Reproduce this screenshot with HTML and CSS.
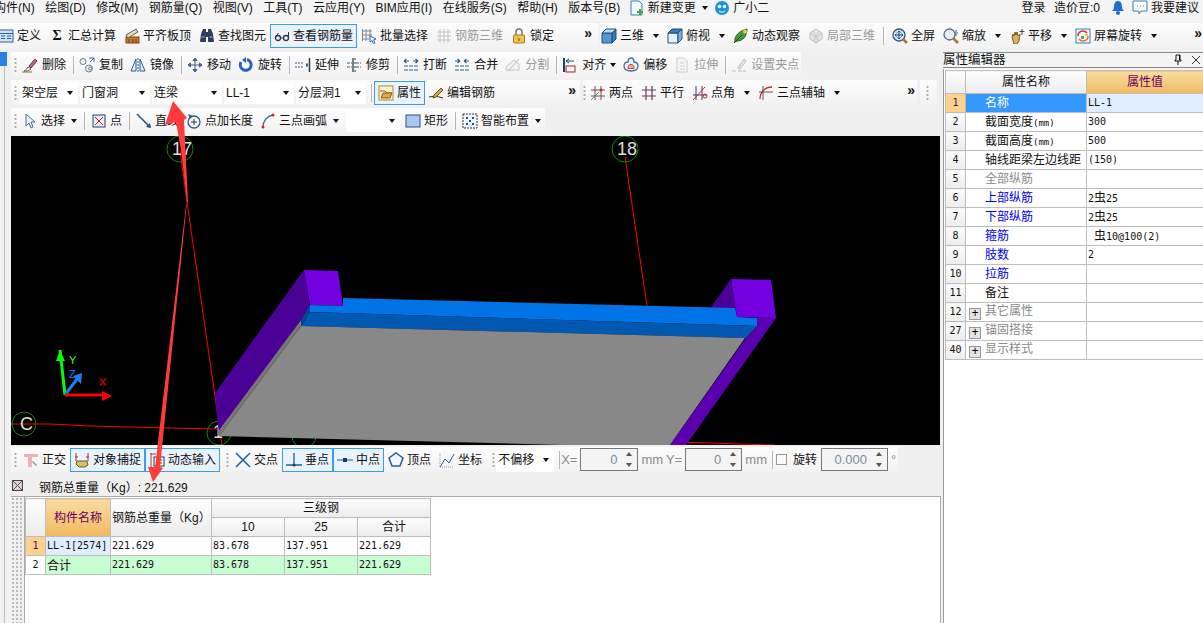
FILE: index.html
```html
<!DOCTYPE html>
<html lang="zh">
<head>
<meta charset="utf-8">
<title>钢筋算量</title>
<link rel="stylesheet" href="styles.css">
</head>
<body>
<svg class="sprite" aria-hidden="true">
<symbol id="i-def" viewBox="0 0 16 16"><rect x="1" y="2" width="14" height="12" fill="#cfe3f7" stroke="#2b5f9e"/><path d="M1 5.500h14M3 8h4M3 10.500h4M9 8h4M9 10.500h4" stroke="#2b5f9e"/></symbol>
<symbol id="i-flat" viewBox="0 0 16 16"><rect x="2" y="9" width="13" height="6" fill="#c9772b" stroke="#7a4312"/><path d="M2 7 12 1l2 3L4 10z" fill="#f2d98e" stroke="#4a6a8c"/><path d="M5 11v4M9 11v4M12 11v4" stroke="#7a4312"/></symbol>
<symbol id="i-find" viewBox="0 0 16 16"><path d="M2 6 4 1h3v13H1zM14 6l-2-5H9v13h6z" fill="#2c3f5c"/><path d="M7 4h2v5H7z" fill="#2c3f5c"/><path d="M2.500 9h3M10.500 9h3" stroke="#9fb6d6"/></symbol>
<symbol id="i-view" viewBox="0 0 16 16"><circle cx="4" cy="10" r="2.500" fill="none" stroke="#333" stroke-width="1.300"/><circle cx="12" cy="10" r="2.500" fill="none" stroke="#333" stroke-width="1.300"/><path d="M6.500 10h3M14.500 9V4M1.500 9l3-4" fill="none" stroke="#333"/></symbol>
<symbol id="i-batch" viewBox="0 0 16 16"><path d="M1.500 1v12M5 1v12M9 1v8M1 3h10M1 7h10M1 11h7" stroke="#7a8796" fill="none"/><path d="M9 8l6 3-2.500 1 1.500 3-1.500.5-1.500-3L9 14z" fill="#fff" stroke="#2b6cb0"/></symbol>
<symbol id="i-r3d" viewBox="0 0 16 16"><path d="M1 4h14M1 8h14M1 12h14M4 1v14M8 1v14M12 1v14" stroke="#c4c4c4"/></symbol>
<symbol id="i-lock" viewBox="0 0 16 16"><path d="M5 7V4a3 3 0 0 1 6 0v3" fill="none" stroke="#777" stroke-width="1.500"/><rect x="2.500" y="7" width="11" height="8" rx="1" fill="#f0c44c" stroke="#a07c1c"/><path d="M8 10v3" stroke="#6b5310"/></symbol>
<symbol id="i-cube" viewBox="0 0 16 16"><path d="M1 5h10v10H1z" fill="#4d9ad8" stroke="#234f78"/><path d="M1 5l4-4h10l-4 4z" fill="#b9dcf5" stroke="#234f78"/><path d="M11 5l4-4v10l-4 4z" fill="#2f78b6" stroke="#234f78"/></symbol>
<symbol id="i-top" viewBox="0 0 16 16"><path d="M1 5h10v10H1z" fill="#e8f1f9" stroke="#234f78"/><path d="M1 5l4-4h10l-4 4z" fill="#3d7fb8" stroke="#234f78"/><path d="M11 5l4-4v10l-4 4z" fill="#7db3dd" stroke="#234f78"/></symbol>
<symbol id="i-orbit" viewBox="0 0 16 16"><path d="M2 14C1 8 6 3 14 1c0 7-4 12-10 12z" fill="#4d9a3a" stroke="#2a5a20"/><circle cx="12" cy="3.500" r="2" fill="#f0d040"/><path d="M1 15 9 7" stroke="#20441a"/></symbol>
<symbol id="i-part" viewBox="0 0 16 16"><path d="M8 1l6 4v6l-6 4-6-4V5z" fill="#e6e6e6" stroke="#c0c0c0"/><path d="M2 5l6 4 6-4M8 9v6M5 3l6 10M11 3 5 13" stroke="#c8c8c8" fill="none"/></symbol>
<symbol id="i-full" viewBox="0 0 16 16"><circle cx="7" cy="7" r="6" fill="#d6e7f7" stroke="#33587e" stroke-width="1.300"/><path d="M7 3v8M3 7h8M7 3 5.500 4.500M7 3l1.500 1.500M7 11 5.500 9.500M7 11l1.500-1.500M3 7l1.500-1.500M3 7l1.500 1.500M11 7 9.500 5.500M11 7 9.500 8.500" stroke="#1f4a7a" fill="none"/><path d="M11 11l4 4" stroke="#a6782a" stroke-width="2.500"/></symbol>
<symbol id="i-zoom" viewBox="0 0 16 16"><circle cx="6.500" cy="6.500" r="5.500" fill="#e4eef8" stroke="#667" stroke-width="1.300"/><path d="M10.500 10.500l4.500 4.500" stroke="#a6782a" stroke-width="2.500"/><path d="M13 2v2M13 6v2M12 5h3" stroke="#3a5f8a"/></symbol>
<symbol id="i-pan" viewBox="0 0 16 16"><path d="M3 9l1-3 1 2 1-4 1 3 1-3 1 4 2-2-1 7-2 3H5z" fill="#d6b261" stroke="#7a5c20"/><path d="M13 1v6M10.500 3.500h5" stroke="#445"/></symbol>
<symbol id="i-rot" viewBox="0 0 16 16"><rect x="1" y="1" width="14" height="14" fill="#eef5fb" stroke="#3d7fb8"/><path d="M3 8a5 5 0 0 1 9-3" fill="none" stroke="#d8392b" stroke-width="1.500"/><path d="M13 8a5 5 0 0 1-9 3" fill="none" stroke="#e2762a" stroke-width="1.500"/><path d="M6 8h3v3H6z" fill="#5aa63c"/><path d="M10 6h3v2h-3z" fill="#e8c83c"/></symbol>
<symbol id="i-del" viewBox="0 0 16 16"><path d="M2 14c2-1 3-2 4-4l3 2c-2 2-4 2-7 2z" fill="#f6f6f6" stroke="#666"/><path d="M7 9l6-7 2 2-6 7z" fill="#c0608a" stroke="#7a2f52"/><path d="M0 15h10" stroke="#8b6a2e"/></symbol>
<symbol id="i-copy" viewBox="0 0 16 16"><circle cx="4" cy="4.500" r="3" fill="none" stroke="#6a7c90"/><circle cx="10" cy="11.500" r="3.500" fill="none" stroke="#6a7c90"/><circle cx="11" cy="11.500" r="1.500" fill="none" stroke="#6a7c90"/><path d="M10 1h5v0M15 5V1l-4 4" fill="none" stroke="#3a6c9e"/></symbol>
<symbol id="i-mirror" viewBox="0 0 16 16"><path d="M1 14 6 2v12zM15 14 10 2v12z" fill="#e6f0fa" stroke="#2c5c8c"/><path d="M8 1v14" stroke="#2c5c8c" stroke-dasharray="2 1"/></symbol>
<symbol id="i-move" viewBox="0 0 16 16"><path d="M8 1v14M1 8h14M8 1 6 3.500h4zM8 15l-2-2.500h4zM1 8l2.500-2v4zM15 8l-2.500-2v4z" fill="#5d7ea8" stroke="#3d5e88"/></symbol>
<symbol id="i-spin" viewBox="0 0 16 16"><path d="M9 2.500a5.500 5.500 0 1 1-6 2.500" fill="none" stroke="#2a62c4" stroke-width="3"/><path d="M8 0v6L4 3z" fill="#2a62c4"/></symbol>
<symbol id="i-ext" viewBox="0 0 16 16"><path d="M0 6h9M0 10h9" stroke="#2c5c8c" stroke-dasharray="2 1"/><path d="M11 6.500h2v3h-2z" fill="#2c5c8c"/><path d="M14.500 1v14" stroke="#2c3e50" stroke-width="1.500"/></symbol>
<symbol id="i-trim" viewBox="0 0 16 16"><path d="M1 6h5M1 10h5M10 6h5M10 10h5" stroke="#2c5c8c" stroke-dasharray="3 1"/><path d="M7 1v14" stroke="#2c3e50" stroke-width="1.300"/><path d="M9 1v14" stroke="#2c3e50" stroke-dasharray="2 2"/></symbol>
<symbol id="i-brk" viewBox="0 0 16 16"><path d="M1 4h5M10 4h5M1 4l2.500-2M1 4l2.500 2M15 4l-2.500-2M15 4l-2.500 2" fill="none" stroke="#2c5c8c" stroke-width="1.200"/><path d="M1 9h14M1 13h14" stroke="#2c5c8c" stroke-dasharray="4 1"/></symbol>
<symbol id="i-mrg" viewBox="0 0 16 16"><path d="M1 4h5M10 4h5M6 4 3.500 2M6 4 3.500 6M10 4l2.500-2M10 4l2.500 2" fill="none" stroke="#2c5c8c" stroke-width="1.200"/><path d="M1 9h14M1 13h14" stroke="#2c5c8c" stroke-dasharray="4 1"/></symbol>
<symbol id="i-spl" viewBox="0 0 16 16"><path d="M1 13h13V7L9 3 1 10z" fill="#f2f2f2" stroke="#c4c4c4"/><path d="M3 14 14 2" stroke="#bbb"/></symbol>
<symbol id="i-alg" viewBox="0 0 16 16"><path d="M2 1v14" stroke="#16447a" stroke-width="2"/><path d="M4 4h8M4 4l3-2M4 4l3 2" fill="none" stroke="#16447a"/><rect x="4" y="9" width="9" height="6" fill="none" stroke="#a02828"/></symbol>
<symbol id="i-off" viewBox="0 0 16 16"><path d="M8 1c3 0 3 3 3 4 3 0 4 2 4 4 0 4-3 5-7 5s-7-1-7-5c0-2 1-4 4-4 0-1 0-4 3-4z" fill="#e6f0fa" stroke="#4a6c94" stroke-width="1.300"/><path d="M5 10.500c0-4 6-4 6 0v1H5z" fill="#f4a8a0" stroke="#c8453c"/></symbol>
<symbol id="i-str" viewBox="0 0 16 16"><path d="M3 1h7l3 3v11H3z" fill="#f6f6f6" stroke="#ccc"/><path d="M6 6h4M6 9h5M6 12h5" stroke="#ccc"/></symbol>
<symbol id="i-grip" viewBox="0 0 16 16"><path d="M1 14h4M7 14h4M12 14h3" stroke="#bbb"/><path d="M7 11l6-9 2 2-6 8z" fill="#e6e6e6" stroke="#bbb"/></symbol>
<symbol id="i-attr" viewBox="0 0 16 16"><rect x="1" y="1" width="14" height="14" fill="#fff3cf" stroke="#b6862c"/><path d="M2 6h5l2 2h5" fill="none" stroke="#8a5a1a"/><path d="M3 13l2-5h9l-2 5z" fill="#eba742" stroke="#8a5a1a"/></symbol>
<symbol id="i-edit" viewBox="0 0 16 16"><path d="M1 12c4-1 8-1 14 1" fill="none" stroke="#333"/><path d="M6 10l7-7 2 2-7 7-3 1z" fill="#d9a83c" stroke="#6e4c1c"/><path d="M13 3l2 2" stroke="#c23"/></symbol>
<symbol id="i-two" viewBox="0 0 16 16"><path d="M5 1v14M11 1v14M1 5h14M1 11h14" stroke="#7a4a5c"/><path d="M1 15 9 7" stroke="#3aa03a"/><circle cx="11" cy="5" r="1.500" fill="#c22"/></symbol>
<symbol id="i-par" viewBox="0 0 16 16"><path d="M5 1v14M11 1v14M1 5h14M1 11h14" stroke="#6c3a5a" stroke-width="1.200"/></symbol>
<symbol id="i-ang" viewBox="0 0 16 16"><path d="M4 1v14M10 1v14M1 10h14" stroke="#3c3c78"/><path d="M1 15 13 2" stroke="#c22"/><circle cx="13" cy="11" r="2" fill="none" stroke="#c22"/></symbol>
<symbol id="i-arc" viewBox="0 0 16 16"><path d="M5 1v14M1 7h14" stroke="#556"/><path d="M2 14C2 7 7 2 14 2" fill="none" stroke="#c22" stroke-width="1.300"/></symbol>
<symbol id="i-sel" viewBox="0 0 16 16"><path d="M4 1v12l3-3 2 5 2-1-2-5h4z" fill="#eaf2fb" stroke="#4c6c94"/></symbol>
<symbol id="i-pt" viewBox="0 0 16 16"><rect x="2" y="2" width="12" height="12" fill="#e6ecf6" stroke="#29407a"/><path d="M4 4l8 8M12 4l-8 8" stroke="#c22"/></symbol>
<symbol id="i-line" viewBox="0 0 16 16"><path d="M1 1l13 13" stroke="#25507e" stroke-width="1.500"/><path d="M15 15l-5-1 4-4z" fill="#25507e"/></symbol>
<symbol id="i-len" viewBox="0 0 16 16"><circle cx="8" cy="9" r="6" fill="#f4f8fd" stroke="#2c5c8c" stroke-width="1.300"/><path d="M8 6v6M5 9h6" stroke="#333"/><path d="M2 1l2 5 3-3z" fill="#2c5c8c"/></symbol>
<symbol id="i-arc3" viewBox="0 0 16 16"><path d="M3 14C3 8 7 3 13 2" fill="none" stroke="#2c6c9e" stroke-width="1.300"/><circle cx="3" cy="14" r="1.500" fill="#c22"/><circle cx="13" cy="2" r="1.500" fill="#c22"/></symbol>
<symbol id="i-rect" viewBox="0 0 16 16"><rect x="1" y="2" width="14" height="12" fill="#a9c8ee" stroke="#28508c"/></symbol>
<symbol id="i-smart" viewBox="0 0 16 16"><rect x="1" y="1" width="14" height="14" fill="#eef4fb" stroke="#333" stroke-dasharray="2 1"/><path d="M4 4h2v2H4zM10 4h2v2h-2zM7 7h2v2H7zM4 10h2v2H4zM10 10h2v2h-2z" fill="#264c7c"/></symbol>
<symbol id="i-ortho" viewBox="0 0 16 16"><path d="M1 2h14v3H9v10H5V5H1z" fill="#e9b3b3"/><path d="M10 9l4 4-1 1-4-4z" fill="#8a97a8"/></symbol>
<symbol id="i-snap" viewBox="0 0 16 16"><path d="M2 1v8M14 1v8M1 5h3M12 5h3" stroke="#a03030"/><path d="M3 9h10l1 4-3 2H5L2 12z" fill="#d9bc6e" stroke="#6e5a22"/></symbol>
<symbol id="i-dyn" viewBox="0 0 16 16"><path d="M2 1v14M1 2h6" stroke="#a04040"/><rect x="5" y="5" width="10" height="9" fill="#fff" stroke="#333"/><path d="M7 8h6M7 11h6" stroke="#333"/></symbol>
<symbol id="i-x" viewBox="0 0 16 16"><path d="M1 1l14 14M15 1 1 15" stroke="#1f5fa8" stroke-width="1.500"/></symbol>
<symbol id="i-perp" viewBox="0 0 16 16"><path d="M8 1v12M0 13h16" stroke="#2c5c8c" stroke-width="1.300"/><circle cx="8" cy="13" r="1.500" fill="#143c6c"/></symbol>
<symbol id="i-mid" viewBox="0 0 16 16"><path d="M0 8h16" stroke="#5d8ec8" stroke-width="1.500"/><rect x="6" y="6" width="4" height="4" fill="#143c6c"/></symbol>
<symbol id="i-ver" viewBox="0 0 16 16"><path d="M8 1l7 5-3 8H4L1 6z" fill="#f2f7fc" stroke="#1f5fa8" stroke-width="1.500"/></symbol>
<symbol id="i-crd" viewBox="0 0 16 16"><path d="M1 15 6 7l4 4 5-9" fill="none" stroke="#1f5fa8"/><path d="M1 1v14h14" fill="none" stroke="#89a" stroke-dasharray="1 1"/></symbol>
<symbol id="i-doc" viewBox="0 0 16 16"><path d="M2 1h8l3 3v11H2z" fill="#f3f8fd" stroke="#3d7fb8"/><path d="M10 9h2v2h2v2h-2v2h-2v-2H8v-2h2z" fill="#3fa63c"/></symbol>
<symbol id="i-face" viewBox="0 0 16 16"><circle cx="8" cy="8" r="7" fill="#1e90e0"/><circle cx="5.500" cy="6.500" r="1.800" fill="#fff"/><circle cx="10.500" cy="6.500" r="1.800" fill="#fff"/><path d="M5 11c2 1.500 4 1.500 6 0" stroke="#fff" fill="none"/></symbol>
<symbol id="i-bell" viewBox="0 0 16 16"><path d="M8 1c3 0 4 3 4 6 0 2 1 3 2 4H2c1-1 2-2 2-4 0-3 1-6 4-6z" fill="#1f6fc8"/><circle cx="8" cy="13" r="2" fill="#1f6fc8"/></symbol>
<symbol id="i-talk" viewBox="0 0 16 16"><path d="M1 1h14v10H9l-2 3v-3H1z" fill="#fff" stroke="#3d7fb8"/><path d="M5 6h1M8 6h1M11 6h1" stroke="#3d7fb8"/></symbol>
<symbol id="i-pin" viewBox="0 0 10 12"><path d="M3 1h4v5h1v1H2V6h1zM5 7v4" fill="none" stroke="#111"/><path d="M6 1h1v5H6z" fill="#111"/></symbol>
<symbol id="i-close" viewBox="0 0 10 10"><path d="M1 1l8 8M9 1 1 9" stroke="#333"/></symbol>
<symbol id="i-corner" viewBox="0 0 11 11"><rect x=".5" y=".5" width="10" height="10" fill="#d4d4dc" stroke="#444"/><path d="M1 1l9 9M10 1l-9 9" stroke="#844"/></symbol>
</svg>

<header class="menubar">
<span class="menu first">构件(N)</span><span class="menu">绘图(D)</span><span class="menu">修改(M)</span><span class="menu">钢筋量(Q)</span><span class="menu">视图(V)</span><span class="menu">工具(T)</span><span class="menu">云应用(Y)</span><span class="menu">BIM应用(I)</span><span class="menu">在线服务(S)</span><span class="menu">帮助(H)</span><span class="menu">版本号(B)</span>
<span class="t newchg"><svg class="ic"><use href="#i-doc"/></svg>新建变更<i class="caret"></i></span>
<span class="t helper"><svg class="ic"><use href="#i-face"/></svg>广小二</span>
<span class="t login">登录</span><span class="t">造价豆:0</span>
<span class="t bell"><svg class="ic"><use href="#i-bell"/></svg></span>
<span class="t"><svg class="ic"><use href="#i-talk"/></svg>我要建议</span>
</header>

<div class="toprow">
<div class="bar bar-a">
<span class="t"><svg class="ic cut"><use href="#i-def"/></svg>定义</span>
<span class="t"><b class="sigma">Σ</b>汇总计算</span>
<span class="t"><svg class="ic"><use href="#i-flat"/></svg>平齐板顶</span>
<span class="t"><svg class="ic"><use href="#i-find"/></svg>查找图元</span>
<span class="t on"><svg class="ic"><use href="#i-view"/></svg>查看钢筋量</span>
<span class="t"><svg class="ic"><use href="#i-batch"/></svg>批量选择</span>
<span class="t off"><svg class="ic"><use href="#i-r3d"/></svg>钢筋三维</span>
<span class="t"><svg class="ic"><use href="#i-lock"/></svg>锁定</span>
<span class="more">»</span>
</div>
<div class="bar bar-b">
<span class="t"><svg class="ic"><use href="#i-cube"/></svg>三维<i class="caret"></i></span>
<span class="t"><svg class="ic"><use href="#i-top"/></svg>俯视<i class="caret"></i></span>
<span class="t"><svg class="ic"><use href="#i-orbit"/></svg>动态观察</span>
<span class="t off"><svg class="ic"><use href="#i-part"/></svg>局部三维</span>
<i class="sep"></i>
<span class="t"><svg class="ic"><use href="#i-full"/></svg>全屏</span>
<span class="t"><svg class="ic"><use href="#i-zoom"/></svg>缩放<i class="caret"></i></span>
<span class="t"><svg class="ic"><use href="#i-pan"/></svg>平移<i class="caret"></i></span>
<span class="t"><svg class="ic"><use href="#i-rot"/></svg>屏幕旋转<i class="caret"></i></span>
<span class="more">»</span>
</div>
</div>

<main class="main">
<div class="strip"><i class="strip-tab"></i></div>
<div class="work">
<div class="bar row2">
<i class="handle"></i>
<span class="t"><svg class="ic"><use href="#i-del"/></svg>删除</span><i class="sep"></i>
<span class="t"><svg class="ic"><use href="#i-copy"/></svg>复制</span>
<span class="t"><svg class="ic"><use href="#i-mirror"/></svg>镜像</span><i class="sep"></i>
<span class="t"><svg class="ic"><use href="#i-move"/></svg>移动</span>
<span class="t"><svg class="ic"><use href="#i-spin"/></svg>旋转</span><i class="sep"></i>
<span class="t"><svg class="ic"><use href="#i-ext"/></svg>延伸</span>
<span class="t"><svg class="ic"><use href="#i-trim"/></svg>修剪</span><i class="sep"></i>
<span class="t"><svg class="ic"><use href="#i-brk"/></svg>打断</span>
<span class="t"><svg class="ic"><use href="#i-mrg"/></svg>合并</span>
<span class="t off"><svg class="ic"><use href="#i-spl"/></svg>分割</span><i class="sep"></i>
<span class="t"><svg class="ic"><use href="#i-alg"/></svg>对齐<i class="caret"></i></span>
<span class="t"><svg class="ic"><use href="#i-off"/></svg>偏移</span>
<span class="t off"><svg class="ic"><use href="#i-str"/></svg>拉伸</span><i class="sep"></i>
<span class="t off"><svg class="ic"><use href="#i-grip"/></svg>设置夹点</span>
</div>
<div class="row3">
<div class="bar r3a">
<i class="handle"></i>
<span class="combo c58">架空层<i class="caret"></i></span>
<span class="combo c70">门窗洞<i class="caret"></i></span>
<span class="combo c70">连梁<i class="caret"></i></span>
<span class="combo c70">LL-1<i class="caret"></i></span>
<span class="combo c70">分层洞1<i class="caret"></i></span>
<i class="sep"></i>
<span class="t on"><svg class="ic"><use href="#i-attr"/></svg>属性</span>
<span class="t"><svg class="ic"><use href="#i-edit"/></svg>编辑钢筋</span>
<span class="more">»</span>
</div>
<div class="bar r3b">
<i class="handle"></i>
<span class="t"><svg class="ic"><use href="#i-two"/></svg>两点</span>
<span class="t"><svg class="ic"><use href="#i-par"/></svg>平行</span>
<span class="t"><svg class="ic"><use href="#i-ang"/></svg>点角<i class="caret"></i></span>
<span class="t"><svg class="ic"><use href="#i-arc"/></svg>三点辅轴<i class="caret"></i></span>
<span class="more">»</span>
</div>
<div class="bar r3c"><i class="handle"></i></div>
</div>
<div class="bar row4">
<i class="handle"></i>
<span class="t"><svg class="ic"><use href="#i-sel"/></svg>选择<i class="caret"></i></span><i class="sep"></i>
<span class="t"><svg class="ic"><use href="#i-pt"/></svg>点</span><i class="sep"></i>
<span class="t"><svg class="ic"><use href="#i-line"/></svg>直线</span>
<span class="t"><svg class="ic"><use href="#i-len"/></svg>点加长度</span>
<span class="t"><svg class="ic"><use href="#i-arc3"/></svg>三点画弧<i class="caret"></i></span>
<span class="combo c54"><i class="caret"></i></span>
<span class="t"><svg class="ic"><use href="#i-rect"/></svg>矩形</span><i class="sep"></i>
<span class="t"><svg class="ic"><use href="#i-smart"/></svg>智能布置<i class="caret"></i></span>
</div>

<svg class="scene" viewBox="11 136 929 309">
<rect x="11" y="136" width="929" height="309" fill="#000"/>
<g fill="none" stroke="#f00">
<path d="M180 150 187 202 222 445"/>
<path d="M625 157 647 306"/>
<path d="M11 424H50L90 426 130 427 170 428 217 429"/>
<path d="M671 442 710 443 740 444 775 445"/>
</g>
<g fill="none" stroke="#0a8a0a">
<circle cx="180" cy="149" r="13"/><circle cx="625" cy="149" r="13"/><circle cx="24" cy="424" r="12"/><circle cx="219" cy="433" r="12"/><circle cx="304" cy="436" r="12"/>
</g>
<g class="axis-label" fill="#ddd">
<text x="172" y="155">17</text><text x="617" y="155">18</text><text x="20" y="430">C</text><text x="213" y="438">1</text>
</g>
<path d="M304 270 215 393 219 436 310 307z" fill="#4b0096"/>
<path d="M304 270 338 271 343 306 310 305z" fill="#7200e0"/>
<path d="M731 279 711 307 737 317z" fill="#4b0096"/>
<path d="M310 305 343 306 343 298 735 308 737 317 757 318 757 326 310 312z" fill="#0073e6"/>
<path d="M310 312 757 326 746 338 301 326z" fill="#0058b0"/>
<path d="M310 305 310 312 301 326 301 320z" fill="#00468c"/>
<path d="M301 326 745 338 670 445 563 445 219 436z" fill="#888"/>
<path d="M301 320 301 326 219 436 217 433z" fill="#777"/>
<path d="M731 279 771 280 776 318 737 317z" fill="#7200e0"/>
<path d="M776 318 686 445 670 445 746 338 757 326 757 318z" fill="#5a00b0"/>
<path d="M65 395 60 350" stroke="#0f0" stroke-width="3"/><path d="M60 350 56 361 65 361z" fill="#0f0"/>
<path d="M65 395 80 375" stroke="#1a7ff0" stroke-width="3"/><path d="M82 373 73 376 81 384z" fill="#1a7ff0"/>
<path d="M65 395H102" stroke="#f00" stroke-width="3"/><path d="M112 396 102 391V401z" fill="#f00"/>
<text class="axis-small" x="69" y="364" fill="#3f3">Y</text>
<text class="axis-small" x="69" y="378" fill="#1a7ff0">Z</text>
<text class="axis-small" x="99" y="386" fill="#f00">X</text>
</svg>

<div class="bar row5">
<i class="handle"></i>
<span class="t"><svg class="ic"><use href="#i-ortho"/></svg>正交</span>
<span class="t on"><svg class="ic"><use href="#i-snap"/></svg>对象捕捉</span>
<span class="t on"><svg class="ic"><use href="#i-dyn"/></svg>动态输入</span>
<i class="handle"></i>
<span class="t"><svg class="ic"><use href="#i-x"/></svg>交点</span>
<span class="t on"><svg class="ic"><use href="#i-perp"/></svg>垂点</span>
<span class="t on"><svg class="ic"><use href="#i-mid"/></svg>中点</span>
<span class="t snap-next"><svg class="ic"><use href="#i-ver"/></svg>顶点</span>
<span class="t snap-next"><svg class="ic"><use href="#i-crd"/></svg>坐标</span>
<i class="handle"></i>
<span class="combo c58 tall">不偏移<i class="caret"></i></span>
<i class="sep"></i>
<span class="lbl">X=</span><span class="spin s58">0</span><span class="lbl">mm</span>
<span class="lbl">Y=</span><span class="spin s57">0</span><span class="lbl">mm</span>
<i class="sep"></i>
<i class="check"></i><span class="rot">旋转</span>
<span class="spin s67">0.000</span><span class="lbl">°</span>
</div>

<div class="sumline"><svg class="corner"><use href="#i-corner"/></svg><span>钢筋总重量（Kg）: 221.629</span></div>

<div class="panel">
<div class="dots"></div>
<div class="sheet">
<table class="grid sum">
<colgroup><col class="c-no"><col class="c-nm"><col class="c-tot"><col class="c-v"><col class="c-v"><col class="c-v"></colgroup>
<tr><th class="hd" rowspan="2"></th><th class="hd gold" rowspan="2">构件名称</th><th class="hd pl" rowspan="2">钢筋总重量（Kg）</th><th class="hd" colspan="3">三级钢</th></tr>
<tr><th class="hd">10</th><th class="hd">25</th><th class="hd">合计</th></tr>
<tr><td class="no peach">1</td><td class="ice">LL-1[2574]</td><td>221.629</td><td>83.678</td><td>137.951</td><td>221.629</td></tr>
<tr class="green"><td class="no plain">2</td><td class="cjk">合计</td><td>221.629</td><td>83.678</td><td>137.951</td><td>221.629</td></tr>
</table>
</div>
</div>
</div>

<aside class="props">
<div class="ptitle"><span>属性编辑器</span><svg class="pin"><use href="#i-pin"/></svg><svg class="x"><use href="#i-close"/></svg></div>
<div class="pbody">
<table class="grid prop">
<colgroup><col class="p-no"><col class="p-nm"><col class="p-val"></colgroup>
<tr class="phead"><th class="hd"></th><th class="hd">属性名称</th><th class="hd gold">属性值</th></tr>
<tr><td class="no peach">1</td><td class="name sel">名称</td><td class="ice">LL-1</td></tr>
<tr><td class="no">2</td><td class="name">截面宽度<span class="mm">(mm)</span></td><td>300</td></tr>
<tr><td class="no">3</td><td class="name">截面高度<span class="mm">(mm)</span></td><td>500</td></tr>
<tr><td class="no">4</td><td class="name">轴线距梁左边线距</td><td>(150)</td></tr>
<tr><td class="no">5</td><td class="name gray">全部纵筋</td><td></td></tr>
<tr><td class="no">6</td><td class="name blue">上部纵筋</td><td>2<span class="cjk">虫</span>25</td></tr>
<tr><td class="no">7</td><td class="name blue">下部纵筋</td><td>2<span class="cjk">虫</span>25</td></tr>
<tr><td class="no">8</td><td class="name blue">箍筋</td><td>&nbsp;<span class="cjk">虫</span>10@100(2)</td></tr>
<tr><td class="no">9</td><td class="name blue">肢数</td><td>2</td></tr>
<tr><td class="no">10</td><td class="name blue">拉筋</td><td></td></tr>
<tr><td class="no">11</td><td class="name">备注</td><td></td></tr>
<tr><td class="no">12</td><td class="name gray tree"><i class="plus">+</i>其它属性</td><td></td></tr>
<tr><td class="no">27</td><td class="name gray tree"><i class="plus">+</i>锚固搭接</td><td></td></tr>
<tr><td class="no">40</td><td class="name gray tree"><i class="plus">+</i>显示样式</td><td></td></tr>
</table>
</div>
</aside>
</main>

<svg class="note" viewBox="0 0 1203 623" aria-hidden="true">
<path d="M173 101 165 125 176 122 181 150 187 202 188 202 184 120 187 118z" fill="#ff3b3b"/>
<path d="M187 202 186 206 155 467 148 467 153 482 163 468 160 467z" fill="#ff3b3b"/>
</svg>
</body>
</html>
```
FILE: styles.css
```css
* { box-sizing: border-box; }
html, body { margin: 0; padding: 0; }
body {
  width: 1203px; height: 623px; overflow: hidden; position: relative;
  background: #f0f0f0; color: #111;
  font: 12px/16px "Liberation Sans", "Noto Sans CJK SC", sans-serif;
}
.sprite { position: absolute; width: 0; height: 0; }
i { font-style: normal; }
.menubar { height: 22px; display: flex; align-items: center; gap: 10.500px; white-space: nowrap; padding-bottom: 7px; background: #f4f4f4; }
.first { margin-left: -6px; }
.newchg { margin-left: -2px; }
.helper { margin-left: -4px; }
.menubar .caret { margin-left: 3px; }
.login { margin-left: auto; margin-right: -2px; }
.bell { margin-right: -5px; }
.menubar .t:last-child { padding-right: 4px; }

.t { display: inline-flex; align-items: center; gap: 3px; white-space: nowrap; flex: none; }
.ic { width: 16px; height: 16px; flex: none; }
.cut { margin-left: -2px; }
.off { color: #9a9a9a; }
.on { height: 24px; padding: 0 3px; margin: 0 -4px; background: #e8f3fd; border: 1px solid #3d9be9; }
.caret { width: 0; height: 0; border: 3px solid transparent; border-top: 4px solid #111; border-bottom: 0; margin-left: 6px; flex: none; }
.sigma { width: 16px; text-align: center; font: bold 14px "Liberation Serif", serif; }
.sep { width: 1px; height: 18px; background: #b8b8b8; flex: none; }
.handle { width: 3px; height: 16px; flex: none; background: radial-gradient(circle, #aaa 1px, transparent 1.200px) 0 0 / 3px 4px; }
.more { margin-left: auto; font-size: 14px; font-weight: bold; line-height: 14px; padding-bottom: 6px; }

.bar { display: flex; align-items: center; gap: 8px; background: linear-gradient(#fcfcfc, #f2f2f2); }
.toprow { display: flex; height: 26px; margin-top: 1px; }
.bar-a { width: 598px; padding-right: 6px; }
.bar-b { flex: 1; margin-left: 2px; padding-left: 1px; padding-right: 1px; }
.main { display: flex; height: 574px; padding-top: 3px; }
.strip { width: 11px; flex: none; position: relative; border-left: 4px solid #f0f0f0; border-right: 6px solid #f0f0f0; background: #bbb; }
.strip-tab { position: absolute; left: -4px; top: 0; width: 7px; height: 14px; background: #2b7fe0; }
.work { width: 930px; flex: none; display: flex; flex-direction: column; }
.row2, .row4 { height: 26px; padding-left: 3px; gap: 7px; flex: none; }
.row2 { width: 790px; }
.row2 .t { gap: 4px; }
.row2 .handle, .row4 .handle { margin-right: -2px; }
.row2 .sep { margin-right: -2px; }
.row2 .caret { margin-left: 0; }
.row4 .sep { margin-right: -1px; }
.row4 .caret { margin-left: 3px; }
.row3 { display: flex; height: 25px; margin-top: 2px; gap: 3px; flex: none; }
.r3a { width: 569px; gap: 2px; padding-left: 3px; padding-right: 4px; }
.r3a .handle { margin-right: 1px; }
.r3a .sep { margin-left: 3px; }
.r3a .on { margin: 0 1px 0 0; }
.r3b { width: 334px; padding-right: 2px; }
.r3b .handle { margin-right: -4px; }
.r3c { width: 17px; padding-left: 6px; }
.combo { display: inline-flex; align-items: center; justify-content: space-between; height: 22px; background: #fff; padding: 0 5px 0 2px; flex: none; white-space: nowrap; }
.row4 .combo .caret, .combo .caret { margin-left: 0; }
.c58 { width: 58px; }
.c70 { width: 70px; }
.c54 { width: 54px; justify-content: flex-end; margin-right: -2px; }
.row4 { width: 534px; margin-top: 3px; }
.scene { display: block; width: 929px; height: 309px; margin-top: 2px; flex: none; }
.axis-label { font: 18px "Liberation Sans", sans-serif; }
.axis-small { font: 11px "Liberation Sans", sans-serif; }
.row5 { height: 25px; width: 887px; margin-top: 2px; padding-left: 3px; gap: 3px; flex: none; }
.row5 .t { margin-right: 1px; }
.row5 .on { margin: 0 -3px 0 0; }
.row5 .handle { margin: 0 3px 0 6px; }
.row5 .snap-next { margin-left: 4px; }
.row5 .handle:first-child { margin-left: 0; }
.row5 .sep { margin: 0 -2px 0 2px; }
.row5 .combo { margin-left: -5px; }
.tall { height: 24px; }
.lbl { color: #8a8a8a; flex: none; font-size: 13px; }
.spin { height: 23px; background: #f4f4f4; border: 1px solid #777; color: #7d8ca0; text-align: right; line-height: 21px; padding-right: 20px; flex: none; font-size: 13px; position: relative; }
.spin::before, .spin::after { content: ""; position: absolute; right: 5px; border: 3px solid transparent; }
.spin::before { top: 3px; border-top: 0; border-bottom: 4px solid #555; }
.spin::after { bottom: 3px; border-bottom: 0; border-top: 4px solid #555; }
.s57 { width: 57px; }
.s58 { width: 58px; }
.s67 { width: 67px; }
.check { width: 11px; height: 11px; border: 1px solid #999; background: #fafafa; flex: none; margin-left: 2px; }
.rot { margin: 0 1px 0 3px; flex: none; white-space: nowrap; }

.sumline { height: 24px; display: flex; align-items: flex-end; padding-left: 1px; flex: none; gap: 16px; }
.corner { width: 11px; height: 11px; margin-bottom: 5px; flex: none; }
.panel { flex: 1; display: flex; min-height: 0; border-top: 1px solid #aaa; }
.dots { width: 13px; flex: none; background: radial-gradient(circle, #bbb 1px, transparent 1.200px) 0 0 / 4px 4px; }
.sheet { flex: 1; background: #fff; border-left: 1px solid #aaa; border-right: 1px solid #aaa; padding-top: 1px; }

.grid { border-collapse: collapse; table-layout: fixed; font: 10px/14px "DejaVu Sans Mono", "Noto Sans CJK SC", monospace; }
.grid td, .grid th { border: 1px solid #bdbdbd; padding: 0 0 0 1px; height: 19px; white-space: nowrap; overflow: hidden; font-weight: normal; }
.grid .hd { background: linear-gradient(#fdfdfd, #ececec); text-align: center; padding: 0; font: 12px/14px "Liberation Sans", "Noto Sans CJK SC", sans-serif; }
.grid .pl { text-align: left; padding-left: 1px; }
.grid .gold { background: linear-gradient(#f9dca0, #f0b95f); color: #660066; }
.grid .no { background: linear-gradient(#fbfbfb, #ededed); text-align: center; padding: 0; }
.grid .peach { background: #fdd28a; color: #660066; }
.grid .plain { background: #fff; }
.grid .ice { background: #dfeeff; }
.cjk { font: 12px/14px "Noto Sans CJK SC", sans-serif; }
.mm { font: 9px/14px "DejaVu Sans Mono", monospace; }
.green td { background: #c8fdd2; }
.sum { width: 405px; }
.c-no { width: 20px; }
.c-nm { width: 65px; }
.c-tot { width: 101px; }
.c-v { width: 73px; }

.props { width: 260px; margin-left: 2px; flex: none; display: flex; flex-direction: column; }
.ptitle { height: 16px; border-top: 1px solid #888; border-bottom: 1px solid #888; display: flex; align-items: center; font-size: 12.500px; background: #f4f4f4; flex: none; }
.ptitle span { flex: 1; }
.pin { width: 10px; height: 12px; margin-right: 8px; }
.x { width: 10px; height: 10px; margin-right: 2px; }
.pbody { flex: 1; background: #fff; border-left: 1px solid #999; margin-top: 1px; padding: 1px 0 0 1px; }
.prop { width: 258px; }
.p-no { width: 20px; }
.p-nm { width: 121px; }
.p-val { width: 117px; }
.phead th { height: 23px; }
.name { font: 12px/14px "Liberation Sans", "Noto Sans CJK SC", sans-serif; }
.grid .name { padding-left: 19px; }
.grid .name.tree { padding-left: 3px; }
.grid .sel { background: #3399ff; color: #fff; }
.gray { color: #8a8a8a; }
.blue { color: #0000ee; }
.plus { display: inline-block; width: 12px; height: 12px; margin-right: 4px; border: 1px solid #999; background: #e4e4e4; color: #000; text-align: center; font: 12px/10px "Liberation Mono", monospace; vertical-align: -2px; }
.note { position: absolute; left: 0; top: 0; width: 1203px; height: 623px; pointer-events: none; }
```
